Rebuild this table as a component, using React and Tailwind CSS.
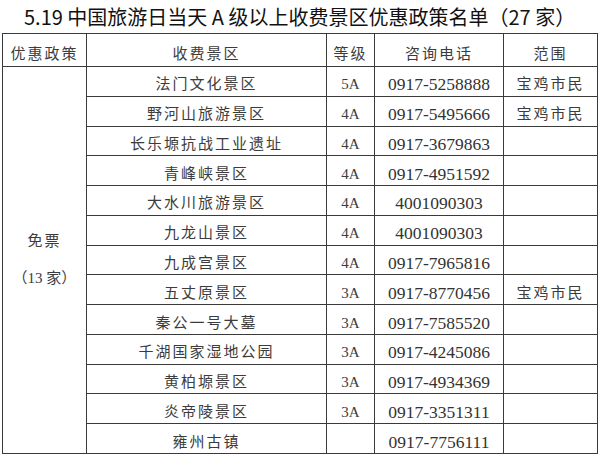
import React from 'react'

const rows = [
    ['法门文化景区', '5A', '0917-5258888', '宝鸡市民'],
    ['野河山旅游景区', '4A', '0917-5495666', '宝鸡市民'],
    ['长乐塬抗战工业遗址', '4A', '0917-3679863', ''],
    ['青峰峡景区', '4A', '0917-4951592', ''],
    ['大水川旅游景区', '4A', '4001090303', ''],
    ['九龙山景区', '4A', '4001090303', ''],
    ['九成宫景区', '4A', '0917-7965816', ''],
    ['五丈原景区', '3A', '0917-8770456', '宝鸡市民'],
    ['秦公一号大墓', '3A', '0917-7585520', ''],
    ['千湖国家湿地公园', '3A', '0917-4245086', ''],
    ['黄柏塬景区', '3A', '0917-4934369', ''],
    ['炎帝陵景区', '3A', '0917-3351311', ''],
    ['雍州古镇', '', '0917-7756111', ''],
]

const cell = 'border-[1.5px] border-[#3a3a3a] text-center align-middle p-0 leading-[20px]'

const App = () => {
    return (
        <div className="w-[600px] h-[454px] bg-white overflow-hidden font-['Liberation_Serif','Noto_Sans_CJK_SC',serif] text-[#3c3c3c]">
            <div className="h-[33px] pl-[24px] pt-[5px] text-[20px] leading-[24px] font-normal text-[#111] font-['Noto_Sans_CJK_SC',sans-serif] whitespace-nowrap">
                5.19 中国旅游日当天 A 级以上收费景区优惠政策名单（27 家）
            </div>
            <table className="ml-[2px] w-[595px] table-fixed border-collapse">
                <colgroup>
                    <col className="w-[84px]" />
                    <col className="w-[240px]" />
                    <col className="w-[48px]" />
                    <col className="w-[129px]" />
                    <col className="w-[94px]" />
                </colgroup>
                <thead>
                    <tr className="h-[33px] text-[15px] tracking-[2px]">
                        <th className={`${cell} font-normal pt-[8px]`}>优惠政策</th>
                        <th className={`${cell} font-normal pt-[8px]`}>收费景区</th>
                        <th className={`${cell} font-normal pt-[8px]`}>等级</th>
                        <th className={`${cell} font-normal pt-[8px]`}>咨询电话</th>
                        <th className={`${cell} font-normal pt-[8px]`}>范围</th>
                    </tr>
                </thead>
                <tbody>
                    {rows.map((r, i) => (
                        <tr key={i} className="h-[29.77px]">
                            {i === 0 && (
                                <td rowSpan={13} className={`${cell} text-[15px] !leading-[37px]`}>
                                    <div className="tracking-[2px]">免票</div>
                                    <div>（13 家）</div>
                                </td>
                            )}
                            <td className={`${cell} pt-[6px] text-[15px] tracking-[2px]`}>{r[0]}</td>
                            <td className={`${cell} pt-[6px] text-[15px]`}>{r[1]}</td>
                            <td className={`${cell} pt-[6px] text-[17.5px] text-[#333]`}>{r[2]}</td>
                            <td className={`${cell} pt-[6px] text-[15px] tracking-[2px]`}>{r[3]}</td>
                        </tr>
                    ))}
                </tbody>
            </table>
        </div>
    )
}

export default App
